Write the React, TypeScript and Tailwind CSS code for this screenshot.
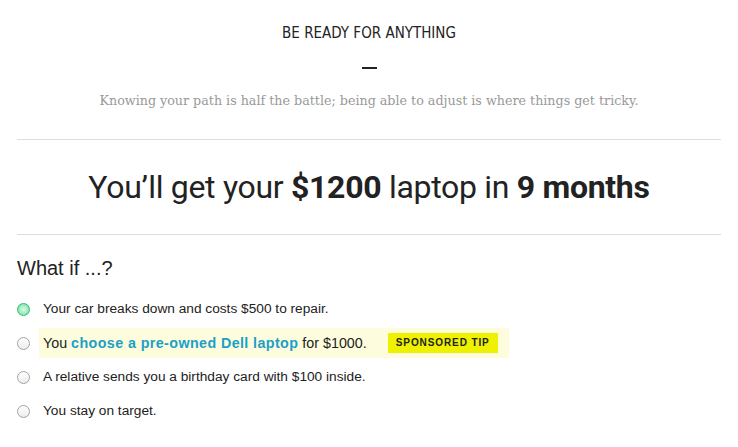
import { ReactNode } from "react";

const options = [
  { id: "car", checked: true, label: <>Your car breaks down and costs $500 to repair.</> },
  {
    id: "dell",
    sponsored: true,
    label: (
      <>
        You <span className="font-bold tracking-[0.4px] text-[#1aa0c8]">choose a pre-owned Dell laptop</span> for $1000.
      </>
    ),
  },
  { id: "relative", label: <>A relative sends you a birthday card with $100 inside.</> },
  { id: "target", label: <>You stay on target.</> },
];

const Radio = ({ checked }: { checked?: boolean }) =>
  checked ? (
    <span className="block w-[13px] h-[13px] rounded-full border border-[#2fbd6e] bg-[radial-gradient(circle,#d8fbe7_0%,#9feac0_55%,#5fd894_100%)] shrink-0" />
  ) : (
    <span className="block w-[13px] h-[13px] rounded-full border border-[#a3a3a3] bg-[linear-gradient(#ffffff,#ececec)] shrink-0" />
  );

const Row = ({ children, checked, sponsored }: { children: ReactNode; checked?: boolean; sponsored?: boolean }) => (
  <li className="flex items-center h-[34px]">
    <Radio checked={checked} />
    <div
      className={
        sponsored
          ? "ml-[9px] flex items-center h-[30px] pl-[4px] pr-[11px] bg-[#fdfddd] text-[14.3px]"
          : "ml-[9px] flex items-center h-[30px] pl-[4px]"
      }
    >
      <span>{children}</span>
      {sponsored && (
        <span className="ml-[21px] flex items-center h-[20px] px-[8px] bg-[#eef200] text-[10px] font-bold tracking-[0.9px] text-[#222]">
          SPONSORED TIP
        </span>
      )}
    </div>
  </li>
);

export default function App() {
  return (
    <main className="w-full bg-white px-[17px] pb-[20px] text-[#222] font-['Liberation_Sans',Arial,sans-serif]">
      <header className="pt-[23px] text-center">
        <h2 className="text-[15px] leading-[20px] font-['Liberation_Sans_Narrow','DejaVu_Sans_Condensed',Roboto,sans-serif]">
          BE READY FOR ANYTHING
        </h2>
        <div className="mx-auto mt-[24px] h-[2px] w-[15px] bg-[#222]" />
        <p className="mt-[23px] text-[12.7px] leading-[18px] text-[#999] font-['DejaVu_Serif',Georgia,serif]">
          Knowing your path is half the battle; being able to adjust is where things get tricky.
        </p>
      </header>

      <div className="mt-[29px] h-px bg-[#dddddd]" />

      <h1 className="mt-[27px] text-center text-[32px] leading-[40px] font-['Roboto',sans-serif] tracking-[-0.3px]">
        You’ll get your <b>$1200</b> laptop in <b>9 months</b>
      </h1>

      <div className="mt-[27px] h-px bg-[#dddddd]" />

      <section className="mt-[21px]">
        <h3 className="text-[20px] leading-[24px]">What if ...?</h3>
        <ul className="mt-[12px] text-[13.7px] leading-[20px]">
          {options.map((o) => (
            <Row key={o.id} checked={o.checked} sponsored={o.sponsored}>
              {o.label}
            </Row>
          ))}
        </ul>
      </section>
    </main>
  );
}
